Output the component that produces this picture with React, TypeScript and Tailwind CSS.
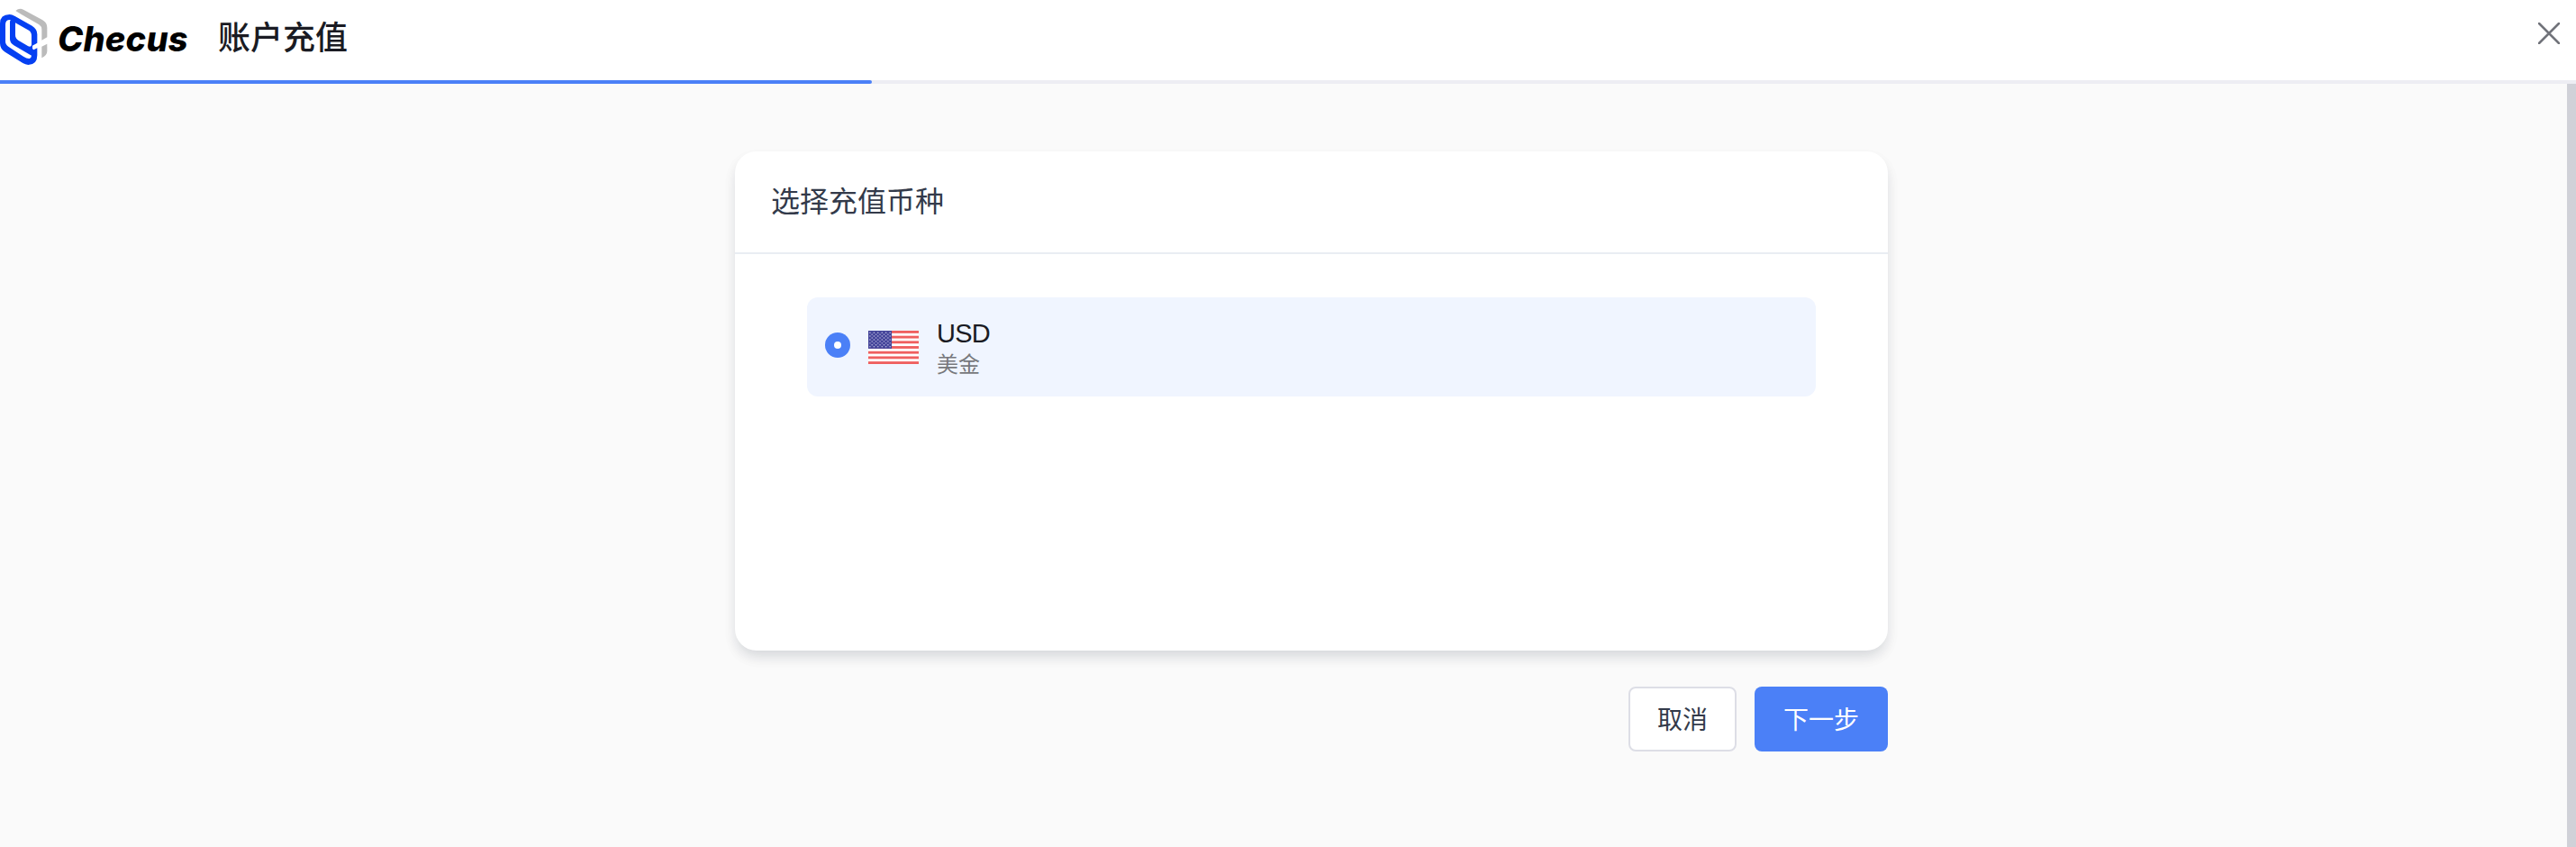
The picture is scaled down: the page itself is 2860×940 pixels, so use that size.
import { useState } from 'react';

const currencies = [{ code: 'USD', name: '美金' }];

function LogoMark() {
  return (
    <svg className="h-[80px] w-[54px] shrink-0" viewBox="0 0 162 240" fill="none">
      <path d="M52 36Q64 25 78 32L142 67Q157 76 157 92V124L139 134V98Q139 88 130 82L70 47Q60 41 52 36Z" fill="#bbbbbb" />
      <path d="M139 155L157 146V171Q157 184 139 193Z" fill="#bbbbbb" />
      <path
        d="M50 54L107 86Q124 97 124 114V143L108 152Q106 162 112 166L124 160V184Q124 216 94 216Q84 215 76 210L18 174Q0 163 0 144V78Q0 48 32 48Q40 48 50 54Z"
        fill="#0540f2"
      />
      <path
        d="M35 66Q18 65 18 82V138Q18 149 29 156L78 188Q90 196 98 195Q104 194 105 185L46 151Q33 143 33 130V72Z"
        fill="#fff"
      />
      <path d="M51 76L96 101Q105 107 105 118V150Q103 158 94 154L62 135Q51 128 51 117Z" fill="#fff" />
    </svg>
  );
}

function UsFlag() {
  const stripes = Array.from({ length: 7 }, (_, i) => i * 6);
  const stars: { x: number; y: number }[] = [];
  for (let row = 0; row < 9; row++) {
    const count = row % 2 === 0 ? 6 : 5;
    for (let col = 0; col < count; col++) {
      stars.push({ x: (row % 2 === 0 ? 2 : 4.3) + col * 4.6, y: 2.3 + row * 2.05 });
    }
  }
  return (
    <svg className="h-[37px] w-[56px] shrink-0" viewBox="0 0 58 39" preserveAspectRatio="none">
      <rect width="58" height="39" rx="1" fill="#fff" />
      {stripes.map((y) => (
        <rect key={y} y={y} width="58" height="3" fill="#ef5f5f" />
      ))}
      <rect width="27" height="21" fill="#46469b" />
      {stars.map((s, i) => (
        <circle key={i} cx={s.x} cy={s.y} r="0.75" fill="#c5c5e4" />
      ))}
    </svg>
  );
}

export default function App() {
  const [selected, setSelected] = useState('USD');

  return (
    <div className="flex h-[940px] w-[2860px] flex-col overflow-hidden bg-[#fafafa] font-['Liberation_Sans','Noto_Sans_CJK_SC',sans-serif]">
      {/* Header */}
      <header className="flex h-[89px] shrink-0 items-start justify-between bg-white pr-[18px]">
        <div className="flex items-start">
          <LogoMark />
          <span className="ml-[10px] mt-[18px] w-[146px] whitespace-nowrap font-['Inter'] text-[38px] font-extrabold italic leading-[50px] tracking-[0.2px] text-black">
            Checus
          </span>
          <h1 className="ml-[32px] mt-[16px] text-[36px] font-medium leading-[54px] text-[#1a1b23]">账户充值</h1>
        </div>
        <button aria-label="关闭" className="mt-[25px]">
          <svg className="h-[24px] w-[24px]" viewBox="0 0 24 24" fill="none" stroke="#71737a" strokeWidth="2.5">
            <path d="M1 1L23 23M23 1L1 23" strokeLinecap="round" />
          </svg>
        </button>
      </header>
      <div className="h-1 shrink-0 bg-[#ededf3]">
        <div className="h-1 w-[968px] rounded-r-[2px] bg-[#4b80f7]" />
      </div>

      <div className="flex flex-1 justify-between">
        <main className="ml-[816px] w-[1280px] pt-[75px]">
          <section className="h-[554px] rounded-[24px] bg-white shadow-[0_8px_16px_-4px_rgba(28,33,60,0.14),0_8px_16px_rgba(28,33,60,0.05)]">
            <h2 className="h-[114px] border-b-2 border-[#e9edf3] px-[40px] pt-[32px] text-[32px] leading-[48px] text-[#333a4a]">
              选择充值币种
            </h2>
            <div className="px-[80px] pt-[48px]">
              {currencies.map((c) => (
                <div
                  key={c.code}
                  onClick={() => setSelected(c.code)}
                  className="flex h-[110px] cursor-pointer items-center rounded-[12px] bg-[#f0f5ff] px-[20px]"
                >
                  <span className="mt-[-4px] flex size-[28px] items-center justify-center rounded-full bg-[#4b80f7]">
                    {selected === c.code && <span className="size-[8px] rounded-full bg-white" />}
                  </span>
                  <span className="ml-[20px]">
                    <UsFlag />
                  </span>
                  <div className="ml-[20px] pt-[4px]">
                    <p className="text-[29px] leading-[36px] tracking-[-0.8px] text-[#1a1b23]">{c.code}</p>
                    <p className="text-[24px] leading-[34px] text-[#77787c]">{c.name}</p>
                  </div>
                </div>
              ))}
            </div>
          </section>

          {/* Actions */}
          <div className="mt-[40px] flex justify-end gap-[20px] text-[28px] leading-[40px]">
            <button className="h-[72px] w-[120px] rounded-[8px] border-2 border-[#dddee6] bg-white pt-[3px] text-[#333a4a]">取消</button>
            <button className="h-[72px] w-[148px] rounded-[8px] bg-[#4b80f7] pt-[3px] text-white">下一步</button>
          </div>
        </main>
        <div className="w-[10px] bg-[#d0d1d8]" />
      </div>
    </div>
  );
}
